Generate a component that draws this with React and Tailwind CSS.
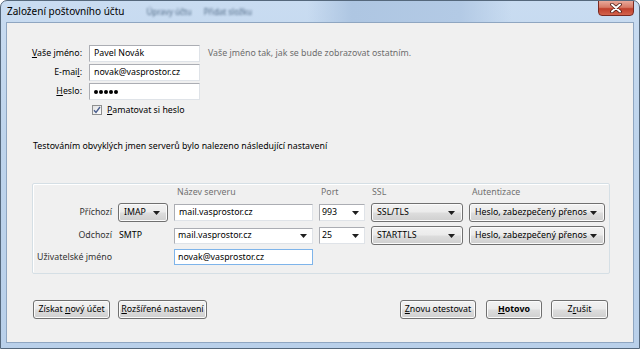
import React from "react";

const Arrow = () => (
  <svg width="7" height="4" viewBox="0 0 7 4" className="shrink-0">
    <path d="M0 0h7L3.5 4z" fill="#1e1e1e" />
  </svg>
);

const btnBg =
  "bg-[linear-gradient(#f2f2f2_0%,#ebebeb_48%,#dddddd_52%,#cfcfcf_100%)]";

function TextBox({ className = "", children }) {
  return (
    <div
      className={`h-[17px] border border-[#abadb3] border-b-[#dfe3e8] border-r-[#dfe3e8] bg-white px-[4px] flex items-center text-black ${className}`}
    >
      {children}
    </div>
  );
}

function Combo({ children }) {
  return (
    <div className="h-[17px] self-center border border-[#abadb3] border-b-[#dfe3e8] border-r-[#dfe3e8] bg-white pl-[2px] pr-[5px] flex items-center justify-between text-black">
      <span>{children}</span>
      <Arrow />
    </div>
  );
}

function Dropdown({ children }) {
  return (
    <div
      className={`h-[19px] rounded-[3px] border border-[#707070] ${btnBg} shadow-[inset_0_0_0_1px_#fbfbfb] pl-[5px] pr-[7px] flex items-center justify-between text-black`}
    >
      <span>{children}</span>
      <Arrow />
    </div>
  );
}

function Button({ className = "", children }) {
  return (
    <div
      className={`h-[19px] rounded-[3px] border border-[#707070] ${btnBg} shadow-[inset_0_0_0_1px_#fbfbfb] flex items-center justify-center text-black ${className}`}
    >
      {children}
    </div>
  );
}

export default function App() {
  return (
    <div className="w-[640px] h-[349px] rounded-t-[7px] border border-[#55687c] bg-[linear-gradient(180deg,#c9dcf1_0%,#bed4ec_40%,#b9d0ea_100%)] flex flex-col font-['Noto_Sans',sans-serif] text-[8.8px] leading-[13px] whitespace-nowrap overflow-hidden">
      {/* title bar */}
      <div className="h-[21px] flex items-start justify-between pl-[6px] bg-[linear-gradient(90deg,transparent_0%,transparent_48%,#aec6e2_55%,#b3cae5_72%,transparent_80%)]">
        <div className="flex items-center h-[21px] gap-[22px]">
          <span className="text-[10px] text-black">Založení poštovního účtu</span>
          <span className="flex gap-[12px] text-[8px] text-[#4f6884] blur-[1px]">
            <span>Úpravy účtu</span>
            <span>Přidat složku</span>
          </span>
        </div>
        <div className="w-[36px] h-[16px] mr-[5px] -mt-[1px] rounded-b-[4px] border border-[#7a2a22] bg-[linear-gradient(180deg,#e9a99a_0%,#d77a66_45%,#c0402c_55%,#d3634d_100%)] flex items-center justify-center">
          <svg width="12" height="10" viewBox="0 0 12 10">
            <path d="M2 1.5l8 7M10 1.5l-8 7" stroke="#4a1a14" strokeWidth="3.6" strokeLinecap="round" />
            <path d="M2 1.5l8 7M10 1.5l-8 7" stroke="#ffffff" strokeWidth="2" strokeLinecap="round" />
          </svg>
        </div>
      </div>

      {/* content */}
      <div className="ml-[5px] mr-[5px] h-[321px] border border-[#8fa6c1] bg-[#f0f0f0] flex flex-col">
        {/* identity form */}
        <div className="pt-[22px] flex flex-col gap-[2px]">
          <div className="flex items-center">
            <span className="w-[75px] text-right text-black">
              <span className="underline">V</span>aše jméno:
            </span>
            <TextBox className="ml-[7px] w-[111px]">Pavel Novák</TextBox>
            <span className="ml-[8px] text-[#6d6d6d]">
              Vaše jméno tak, jak se bude zobrazovat ostatním.
            </span>
          </div>
          <div className="flex items-center">
            <span className="w-[75px] text-right text-black">
              E-mai<span className="underline">l</span>:
            </span>
            <TextBox className="ml-[7px] w-[111px]">novak@vasprostor.cz</TextBox>
          </div>
          <div className="flex items-center">
            <span className="w-[75px] text-right text-black">
              <span className="underline">H</span>eslo:
            </span>
            <TextBox className="ml-[7px] w-[111px] gap-[1px]">
              <span className="w-[4px] h-[4px] rounded-full bg-black" />
              <span className="w-[4px] h-[4px] rounded-full bg-black" />
              <span className="w-[4px] h-[4px] rounded-full bg-black" />
              <span className="w-[4px] h-[4px] rounded-full bg-black" />
              <span className="w-[4px] h-[4px] rounded-full bg-black" />
            </TextBox>
          </div>
          <div className="flex items-center h-[14px] mt-[1px] pl-[85px] gap-[5px]">
            <div className="w-[10px] h-[10px] border border-[#8e8f8f] bg-[linear-gradient(135deg,#e2e2e2,#fdfdfd)] flex items-center justify-center">
              <svg width="8" height="8" viewBox="0 0 8 8">
                <path d="M1 4.2l2 2.2L7 1" stroke="#4a5f8f" strokeWidth="1.4" fill="none" />
              </svg>
            </div>
            <span className="text-black">
              <span className="underline">P</span>amatovat si heslo
            </span>
          </div>
        </div>

        <p className="mt-[23px] pl-[26px] text-black">
          Testováním obvyklých jmen serverů bylo nalezeno následující nastavení
        </p>

        {/* server settings group */}
        <div className="mt-[30px] ml-[25px] w-[578px] h-[91px] border border-[#d5dfe5] rounded-[2px] shadow-[inset_1px_1px_0_#ffffff] pt-[2px]">
          <div className="grid grid-cols-[79px_50px_139px_46px_92px_136px] gap-x-[6px] gap-y-[4px] items-center">
            <span />
            <span />
            <span className="pl-[3px] text-[#707070]">Název serveru</span>
            <span className="pl-[2px] text-[#707070]">Port</span>
            <span className="pl-[1px] text-[#707070]">SSL</span>
            <span className="pl-[3px] text-[#707070]">Autentizace</span>

            <span className="text-right text-[#333333]">Příchozí</span>
            <Dropdown>IMAP</Dropdown>
            <TextBox className="h-[16px] px-[3px]">mail.vasprostor.cz</TextBox>
            <Combo>993</Combo>
            <Dropdown>SSL/TLS</Dropdown>
            <Dropdown>Heslo, zabezpečený přenos</Dropdown>

            <span className="text-right text-[#333333]">Odchozí</span>
            <span className="pl-[1px] text-black">SMTP</span>
            <div className="h-[16px] border border-[#abadb3] border-b-[#dfe3e8] border-r-[#dfe3e8] bg-white pl-[3px] pr-[5px] flex items-center justify-between text-black">
              <span>mail.vasprostor.cz</span>
              <Arrow />
            </div>
            <Combo>25</Combo>
            <Dropdown>STARTTLS</Dropdown>
            <Dropdown>Heslo, zabezpečený přenos</Dropdown>

            <span className="col-span-2 pl-[4px] text-[#333333]">Uživatelské jméno</span>
            <div className="h-[16px] border border-[#7eb4ea] bg-white px-[3px] flex items-center text-black">
              novak@vasprostor.cz
            </div>
          </div>
        </div>

        {/* buttons */}
        <div className="mt-[26px] pl-[26px] pr-[25px] flex justify-between">
          <div className="flex gap-[8px]">
            <Button className="w-[77px]">
              Získat&nbsp;<span className="underline">n</span>ový účet
            </Button>
            <Button className="w-[89px]">
              <span className="underline">R</span>ozšířené nastavení
            </Button>
          </div>
          <div className="flex">
            <Button className="w-[76px]">
              <span className="underline">Z</span>novu otestovat
            </Button>
            <Button className="w-[56px] ml-[10px] border-[#3d3d3d] font-bold">
              <span className="underline">H</span>otovo
            </Button>
            <Button className="w-[57px] ml-[9px]">
              Z<span className="underline">r</span>ušit
            </Button>
          </div>
        </div>
      </div>
    </div>
  );
}
